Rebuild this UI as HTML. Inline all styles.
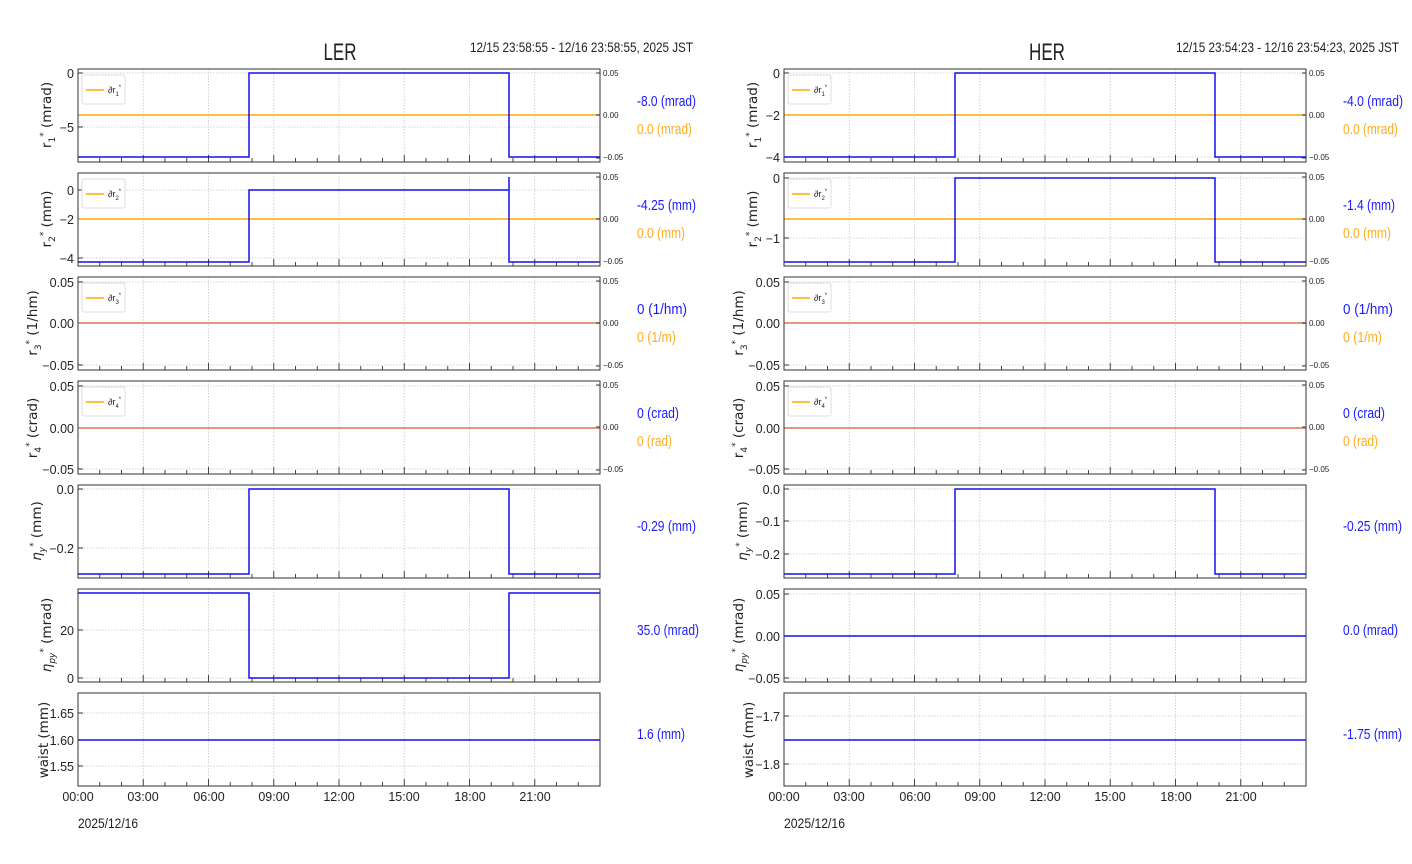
<!DOCTYPE html>
<html><head><meta charset="utf-8"><style>
html,body{margin:0;padding:0;background:#fff;width:1412px;height:864px;overflow:hidden}
svg{display:block}
.t{font-family:"Liberation Sans",sans-serif;font-size:13px;fill:#222}
.s{font-family:"Liberation Sans",sans-serif;font-size:8px;fill:#222}
.yl{font-family:"DejaVu Sans","Liberation Sans",sans-serif;font-size:13.5px;fill:#222}
.v{font-family:"Liberation Sans",sans-serif;font-size:14.5px}
</style></head><body>
<svg id="c" width="1412" height="864" xmlns="http://www.w3.org/2000/svg">
<g id="g"></g>
<text x="340" y="60" class="t" style="font-size:24px" text-anchor="middle" textLength="33" lengthAdjust="spacingAndGlyphs">LER</text>
<text x="470" y="52" class="t" style="font-size:14px" textLength="223" lengthAdjust="spacingAndGlyphs">12/15 23:58:55 - 12/16 23:58:55, 2025 JST</text>
<text x="1047" y="60" class="t" style="font-size:24px" text-anchor="middle" textLength="36" lengthAdjust="spacingAndGlyphs">HER</text>
<text x="1176" y="52" class="t" style="font-size:14px" textLength="223" lengthAdjust="spacingAndGlyphs">12/15 23:54:23 - 12/16 23:54:23, 2025 JST</text>

<g class="t" text-anchor="end" style="font-size:12.5px">
<text x="74" y="78">0</text><text x="74" y="132">−5</text>
<text x="74" y="195">0</text><text x="74" y="224">−2</text><text x="74" y="263">−4</text>
<text x="74" y="287">0.05</text><text x="74" y="328">0.00</text><text x="74" y="370">−0.05</text>
<text x="74" y="391">0.05</text><text x="74" y="433">0.00</text><text x="74" y="474">−0.05</text>
<text x="74" y="494">0.0</text><text x="74" y="553">−0.2</text>
<text x="74" y="635">20</text><text x="74" y="683">0</text>
<text x="74" y="718">1.65</text><text x="74" y="745">1.60</text><text x="74" y="771">1.55</text>
</g>
<g class="t" text-anchor="end" style="font-size:12.5px">
<text x="780" y="78">0</text><text x="780" y="120">−2</text><text x="780" y="162">−4</text>
<text x="780" y="183">0</text><text x="780" y="243">−1</text>
<text x="780" y="287">0.05</text><text x="780" y="328">0.00</text><text x="780" y="370">−0.05</text>
<text x="780" y="391">0.05</text><text x="780" y="433">0.00</text><text x="780" y="474">−0.05</text>
<text x="780" y="494">0.0</text><text x="780" y="526">−0.1</text><text x="780" y="559">−0.2</text>
<text x="780" y="599">0.05</text><text x="780" y="641">0.00</text><text x="780" y="683">−0.05</text>
<text x="780" y="721">−1.7</text><text x="780" y="769">−1.8</text>
</g>
<g class="s">
<text x="603" y="76">0.05</text><text x="603" y="118">0.00</text><text x="603" y="160">−0.05</text>
<text x="603" y="180">0.05</text><text x="603" y="222">0.00</text><text x="603" y="264">−0.05</text>
<text x="603" y="284">0.05</text><text x="603" y="326">0.00</text><text x="603" y="368">−0.05</text>
<text x="603" y="388">0.05</text><text x="603" y="430">0.00</text><text x="603" y="472">−0.05</text>
<text x="1309" y="76">0.05</text><text x="1309" y="118">0.00</text><text x="1309" y="160">−0.05</text>
<text x="1309" y="180">0.05</text><text x="1309" y="222">0.00</text><text x="1309" y="264">−0.05</text>
<text x="1309" y="284">0.05</text><text x="1309" y="326">0.00</text><text x="1309" y="368">−0.05</text>
<text x="1309" y="388">0.05</text><text x="1309" y="430">0.00</text><text x="1309" y="472">−0.05</text>
</g>
<g class="yl" text-anchor="middle">
<text transform="translate(51,115) rotate(-90)">r<tspan dy="4" font-size="9">1</tspan><tspan dy="-9" font-size="9">*</tspan><tspan dy="5">  (mrad)</tspan></text>
<text transform="translate(51,219) rotate(-90)">r<tspan dy="4" font-size="9">2</tspan><tspan dy="-9" font-size="9">*</tspan><tspan dy="5">  (mm)</tspan></text>
<text transform="translate(37,323) rotate(-90)">r<tspan dy="4" font-size="9">3</tspan><tspan dy="-9" font-size="9">*</tspan><tspan dy="5">  (1/hm)</tspan></text>
<text transform="translate(37,428) rotate(-90)">r<tspan dy="4" font-size="9">4</tspan><tspan dy="-9" font-size="9">*</tspan><tspan dy="5">  (crad)</tspan></text>
<text transform="translate(41,531) rotate(-90)"><tspan font-style="italic">η</tspan><tspan dy="4" font-size="9" font-style="italic">y</tspan><tspan dy="-9" font-size="9">*</tspan><tspan dy="5">  (mm)</tspan></text>
<text transform="translate(51,635) rotate(-90)"><tspan font-style="italic">η</tspan><tspan dy="4" font-size="9" font-style="italic">py</tspan><tspan dy="-9" font-size="9">*</tspan><tspan dy="5">  (mrad)</tspan></text>
<text transform="translate(48,740) rotate(-90)">waist (mm)</text>
<text transform="translate(757,115) rotate(-90)">r<tspan dy="4" font-size="9">1</tspan><tspan dy="-9" font-size="9">*</tspan><tspan dy="5">  (mrad)</tspan></text>
<text transform="translate(757,219) rotate(-90)">r<tspan dy="4" font-size="9">2</tspan><tspan dy="-9" font-size="9">*</tspan><tspan dy="5">  (mm)</tspan></text>
<text transform="translate(743,323) rotate(-90)">r<tspan dy="4" font-size="9">3</tspan><tspan dy="-9" font-size="9">*</tspan><tspan dy="5">  (1/hm)</tspan></text>
<text transform="translate(743,428) rotate(-90)">r<tspan dy="4" font-size="9">4</tspan><tspan dy="-9" font-size="9">*</tspan><tspan dy="5">  (crad)</tspan></text>
<text transform="translate(747,531) rotate(-90)"><tspan font-style="italic">η</tspan><tspan dy="4" font-size="9" font-style="italic">y</tspan><tspan dy="-9" font-size="9">*</tspan><tspan dy="5">  (mm)</tspan></text>
<text transform="translate(743,635) rotate(-90)"><tspan font-style="italic">η</tspan><tspan dy="4" font-size="9" font-style="italic">py</tspan><tspan dy="-9" font-size="9">*</tspan><tspan dy="5">  (mrad)</tspan></text>
<text transform="translate(753,740) rotate(-90)">waist (mm)</text>
</g>
<g class="s" style="font-size:9px">
<text x="108" y="93">∂r<tspan dy="3" font-size="6">1</tspan><tspan dy="-7" font-size="6">*</tspan></text>
<text x="108" y="197">∂r<tspan dy="3" font-size="6">2</tspan><tspan dy="-7" font-size="6">*</tspan></text>
<text x="108" y="301">∂r<tspan dy="3" font-size="6">3</tspan><tspan dy="-7" font-size="6">*</tspan></text>
<text x="108" y="405">∂r<tspan dy="3" font-size="6">4</tspan><tspan dy="-7" font-size="6">*</tspan></text>
<text x="814" y="93">∂r<tspan dy="3" font-size="6">1</tspan><tspan dy="-7" font-size="6">*</tspan></text>
<text x="814" y="197">∂r<tspan dy="3" font-size="6">2</tspan><tspan dy="-7" font-size="6">*</tspan></text>
<text x="814" y="301">∂r<tspan dy="3" font-size="6">3</tspan><tspan dy="-7" font-size="6">*</tspan></text>
<text x="814" y="405">∂r<tspan dy="3" font-size="6">4</tspan><tspan dy="-7" font-size="6">*</tspan></text>
</g>
<g class="v">
<text x="637" y="106" fill="#1a1aff" textLength="59" lengthAdjust="spacingAndGlyphs">-8.0 (mrad)</text><text x="637" y="134" fill="#ffad1f" textLength="55" lengthAdjust="spacingAndGlyphs">0.0 (mrad)</text>
<text x="637" y="210" fill="#1a1aff" textLength="59" lengthAdjust="spacingAndGlyphs">-4.25 (mm)</text><text x="637" y="238" fill="#ffad1f" textLength="48" lengthAdjust="spacingAndGlyphs">0.0 (mm)</text>
<text x="637" y="314" fill="#1a1aff" textLength="50" lengthAdjust="spacingAndGlyphs">0 (1/hm)</text><text x="637" y="342" fill="#ffad1f" textLength="39" lengthAdjust="spacingAndGlyphs">0 (1/m)</text>
<text x="637" y="418" fill="#1a1aff" textLength="42" lengthAdjust="spacingAndGlyphs">0 (crad)</text><text x="637" y="446" fill="#ffad1f" textLength="35" lengthAdjust="spacingAndGlyphs">0 (rad)</text>
<text x="637" y="531" fill="#1a1aff" textLength="59" lengthAdjust="spacingAndGlyphs">-0.29 (mm)</text>
<text x="637" y="635" fill="#1a1aff" textLength="62" lengthAdjust="spacingAndGlyphs">35.0 (mrad)</text>
<text x="637" y="739" fill="#1a1aff" textLength="48" lengthAdjust="spacingAndGlyphs">1.6 (mm)</text>
<text x="1343" y="106" fill="#1a1aff" textLength="60" lengthAdjust="spacingAndGlyphs">-4.0 (mrad)</text><text x="1343" y="134" fill="#ffad1f" textLength="55" lengthAdjust="spacingAndGlyphs">0.0 (mrad)</text>
<text x="1343" y="210" fill="#1a1aff" textLength="52" lengthAdjust="spacingAndGlyphs">-1.4 (mm)</text><text x="1343" y="238" fill="#ffad1f" textLength="48" lengthAdjust="spacingAndGlyphs">0.0 (mm)</text>
<text x="1343" y="314" fill="#1a1aff" textLength="50" lengthAdjust="spacingAndGlyphs">0 (1/hm)</text><text x="1343" y="342" fill="#ffad1f" textLength="39" lengthAdjust="spacingAndGlyphs">0 (1/m)</text>
<text x="1343" y="418" fill="#1a1aff" textLength="42" lengthAdjust="spacingAndGlyphs">0 (crad)</text><text x="1343" y="446" fill="#ffad1f" textLength="35" lengthAdjust="spacingAndGlyphs">0 (rad)</text>
<text x="1343" y="531" fill="#1a1aff" textLength="59" lengthAdjust="spacingAndGlyphs">-0.25 (mm)</text>
<text x="1343" y="635" fill="#1a1aff" textLength="55" lengthAdjust="spacingAndGlyphs">0.0 (mrad)</text>
<text x="1343" y="739" fill="#1a1aff" textLength="59" lengthAdjust="spacingAndGlyphs">-1.75 (mm)</text>
</g>
<g class="t" text-anchor="middle" style="font-size:12.5px">
<text x="78" y="801">00:00</text><text x="143" y="801">03:00</text><text x="209" y="801">06:00</text><text x="274" y="801">09:00</text><text x="339" y="801">12:00</text><text x="404" y="801">15:00</text><text x="470" y="801">18:00</text><text x="535" y="801">21:00</text>
<text x="784" y="801">00:00</text><text x="849" y="801">03:00</text><text x="915" y="801">06:00</text><text x="980" y="801">09:00</text><text x="1045" y="801">12:00</text><text x="1110" y="801">15:00</text><text x="1176" y="801">18:00</text><text x="1241" y="801">21:00</text>
</g>
<text x="78" y="828" class="t" style="font-size:14px" textLength="60" lengthAdjust="spacingAndGlyphs">2025/12/16</text>
<text x="784" y="828" class="t" style="font-size:14px" textLength="61" lengthAdjust="spacingAndGlyphs">2025/12/16</text>
</svg>
<script>
var g=document.getElementById('g'),o='';
var tops=[69,173,277,381,485,589,693],H=93,W=522;
function P(ox,i,yt,lo,hi,spike,orange,sec,flat){
 var t=tops[i],b=t+H,r=ox+W;
 for(var h=3;h<24;h+=3){var x=ox+h*21.75;o+='<line x1="'+x+'" y1="'+t+'" x2="'+x+'" y2="'+b+'" stroke="#c8c8c8" stroke-width="0.8" stroke-dasharray="1.5,1.5"/>';}
 yt.forEach(function(y){o+='<line x1="'+ox+'" y1="'+y+'" x2="'+r+'" y2="'+y+'" stroke="#c8c8c8" stroke-width="0.8" stroke-dasharray="1.5,1.5"/><line x1="'+ox+'" y1="'+y+'" x2="'+(ox+5)+'" y2="'+y+'" stroke="#333"/>';});
 for(var h=1;h<24;h++){var x=ox+h*21.75,l=h%3?4:7;o+='<line x1="'+x+'" y1="'+b+'" x2="'+x+'" y2="'+(b-l)+'" stroke="#444"/>';}
 if(orange!=null)o+='<line x1="'+ox+'" y1="'+orange+'" x2="'+r+'" y2="'+orange+'" stroke="#ffa500" stroke-width="1.5"/>';
 if(flat!=null)o+='<line x1="'+ox+'" y1="'+flat+'" x2="'+r+'" y2="'+flat+'" stroke="'+(orange!=null&&orange==flat?'#e08080':'#1010ee')+'" stroke-width="1.5"/>';
 else{var a=ox+171,c=ox+431;
  var d= i==5&&ox<700 ? 'M'+ox+' '+hi+'H'+a+'V'+lo+'H'+c+'V'+hi+'H'+r : 'M'+ox+' '+lo+'H'+a+'V'+hi+'H'+c+(spike?'V'+spike:'')+'V'+lo+'H'+r;
  o+='<path d="'+d+'" fill="none" stroke="#1010ee" stroke-width="1.5"/>';}
 if(sec){[t+4,t+46,b-4].forEach(function(y){o+='<line x1="'+(r-4)+'" y1="'+y+'" x2="'+r+'" y2="'+y+'" stroke="#333"/>';});
  o+='<rect x="'+(ox+4)+'" y="'+(t+6)+'" width="43" height="29" rx="2" fill="#fff" fill-opacity="0.85" stroke="#ddd"/><line x1="'+(ox+8)+'" y1="'+(t+21)+'" x2="'+(ox+26)+'" y2="'+(t+21)+'" stroke="#ffa500" stroke-width="1.5"/>';}
 o+='<rect x="'+ox+'" y="'+t+'" width="'+W+'" height="'+H+'" fill="none" stroke="#333" stroke-width="1"/>';
}
var L=78,R=784;
P(L,0,[73,127],157,73,null,115,1);
P(L,1,[190,219,258],262,190,177,219,1);
P(L,2,[282,323,365],0,0,null,323,1,323);
P(L,3,[386,428,469],0,0,null,428,1,428);
P(L,4,[489,548],574,489,null,null,0);
P(L,5,[630,678],678,593,null,null,0);
P(L,6,[713,740,766],0,0,null,null,0,740);
P(R,0,[73,115,157],157,73,null,115,1);
P(R,1,[178,238],262,178,null,219,1);
P(R,2,[282,323,365],0,0,null,323,1,323);
P(R,3,[386,428,469],0,0,null,428,1,428);
P(R,4,[489,521,554],574,489,null,null,0);
P(R,5,[594,636,678],0,0,null,null,0,636);
P(R,6,[716,764],0,0,null,null,0,740);
g.innerHTML=o;
</script>
</body></html>
